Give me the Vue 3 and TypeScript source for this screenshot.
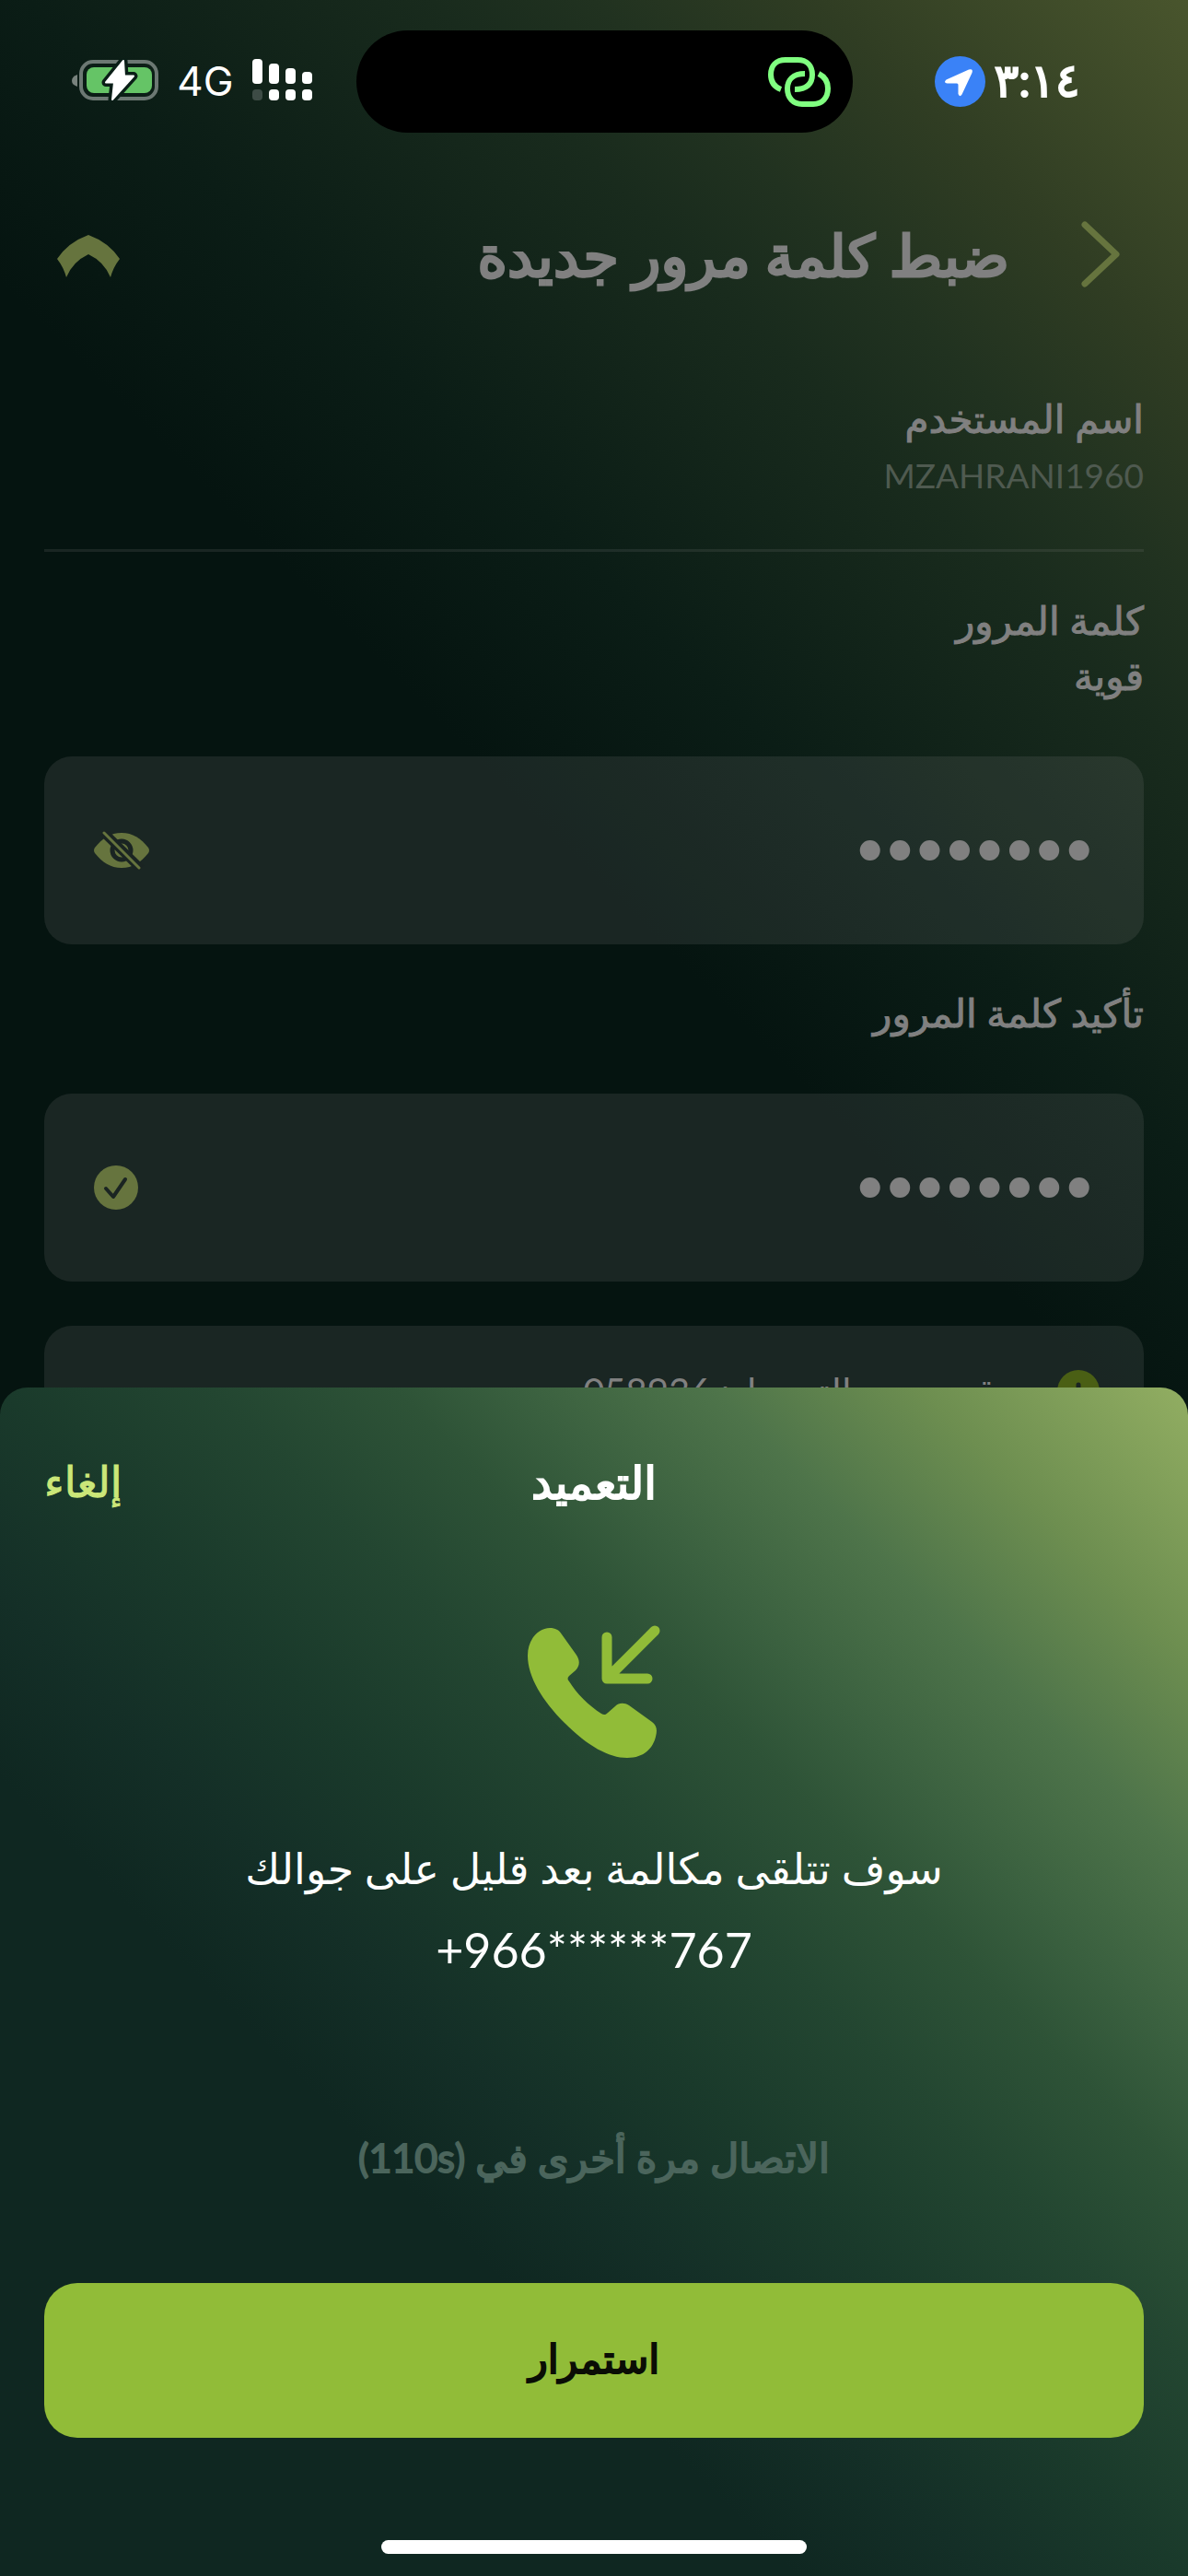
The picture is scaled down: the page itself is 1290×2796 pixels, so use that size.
<script setup lang="ts">
import { ref } from 'vue'

const username = 'MZAHRANI1960'
const password = ref('Abcd1234')
const confirmation = ref('Abcd1234')
const seconds = ref(110)
const bars = [27, 22, 17, 13]
</script>

<template>
  <div class="screen" dir="rtl">
    <div class="status">
      <div class="clock">
        <svg class="location" viewBox="0 0 55 55" aria-hidden="true">
          <circle cx="27.5" cy="27.5" r="27.5" fill="#3a82f7" />
          <path d="M12.500 25.500L37 14.500Q42 13 40.500 18L29.500 41.500Q27 45 25.500 41V31Q25.500 29.500 24 29.500H13.500Q9 28.500 12.500 25.500Z" fill="#fff" />
        </svg>
        <span class="time">٣:١٤</span>
      </div>
      <div class="island">
        <svg class="link" viewBox="0 0 68 54" aria-hidden="true" fill="none" stroke="#80ff80" stroke-width="6">
          <path d="M14 35C6 32 3 26 3 19C3 9 9 3 19 3H32C42 3 48 9 48 19C48 29 42 35 29 35" />
          <path d="M40 18C27 18 21 25 21 34C21 44 27 51 37 51H49C59 51 65 44 65 34C65 26 61 21 55 18" />
        </svg>
      </div>
      <div class="network">
        <div class="signal">
          <span v-for="(h, i) in bars" :key="i" class="column">
            <i class="bar" :style="{ height: h + 'px' }"></i>
            <i class="bar foot" :class="{ off: i === 0 }"></i>
          </span>
        </div>
        <span class="carrier">4G</span>
        <svg class="battery" viewBox="0 0 94 46" aria-hidden="true">
          <path d="M6 17V30Q0 28 0 23.500Q0 19 6 17Z" fill="#78827d" />
          <rect x="10" y="3" width="82" height="40" rx="13" fill="none" stroke="#6c7873" stroke-width="4" />
          <rect x="16" y="9" width="71" height="28" rx="8" fill="#65c466" />
          <path d="M56 2L37 25.500H46L44 44L67 18.500H57Z" fill="#fff" stroke="#0a1e17" stroke-width="9" stroke-linejoin="round" />
          <path d="M56 2L37 25.500H46L44 44L67 18.500H57Z" fill="#fff" stroke="#fff" stroke-width="2" stroke-linejoin="round" />
        </svg>
      </div>
    </div>

    <header class="header">
      <button class="icon-button" type="button" aria-label="رجوع">
        <svg width="42" height="72" viewBox="0 0 42 72" fill="none" stroke="#66743e" stroke-width="7" stroke-linecap="round" stroke-linejoin="round">
          <path d="M4 4L38 36L4 68" />
        </svg>
      </button>
      <h1 class="title">ضبط كلمة مرور جديدة</h1>
      <svg class="brand" viewBox="0 0 68 46" aria-hidden="true">
        <path d="M34 0Q56 8 68 26Q61 35 58 46Q51 29 34 21Q17 29 10 46Q7 35 0 26Q12 8 34 0Z" fill="#66743e" />
      </svg>
    </header>

    <main class="form">
      <section class="account">
        <span class="label">اسم المستخدم</span>
        <span class="username" dir="ltr">{{ username }}</span>
      </section>

      <label class="label" for="password">كلمة المرور</label>
      <span class="label strength">قوية</span>
      <div class="field">
        <input id="password" v-model="password" type="password" />
        <button class="icon-button" type="button" aria-label="إظهار كلمة المرور">
          <svg width="60" height="42" viewBox="0 0 60 42">
            <path d="M1 18C9 8 18 2 30 2C42 2 51 8 59 18Q61 21 59 24C51 34 42 40 30 40C18 40 9 34 1 24Q-1 21 1 18Z" fill="#66743e" />
            <circle cx="30" cy="21" r="10" fill="#66743e" stroke="#1a2422" stroke-width="5" />
            <path d="M10 1L51 41" stroke="#1a2422" stroke-width="10" />
            <path d="M11 2L49 40" stroke="#66743e" stroke-width="3" stroke-linecap="round" />
          </svg>
        </button>
      </div>

      <label class="label confirm" for="confirmation">تأكيد كلمة المرور</label>
      <div class="field">
        <input id="confirmation" v-model="confirmation" type="password" />
        <svg width="48" height="48" viewBox="0 0 48 48" aria-hidden="true">
          <circle cx="24" cy="24" r="24" fill="#66743e" />
          <path d="M13 25L21 34L34 15" fill="none" stroke="#1a2422" stroke-width="4" stroke-linecap="round" stroke-linejoin="round" />
        </svg>
      </div>

      <div class="notice">
        <svg width="46" height="46" viewBox="0 0 46 46" aria-hidden="true">
          <circle cx="23" cy="23" r="23" fill="#4a5f14" />
          <path d="M23 16V25M23 33V34" stroke="#1a2422" stroke-width="5" stroke-linecap="round" />
        </svg>
        <span>رقم مرجع التوصيل: 058936</span>
      </div>
    </main>

    <section class="sheet" role="dialog" aria-labelledby="sheet-title">
      <div class="sheet-header">
        <h2 id="sheet-title" class="sheet-title">التعميد</h2>
        <button class="cancel" type="button">إلغاء</button>
      </div>
      <svg class="call" viewBox="0 0 144 144" aria-hidden="true">
        <path d="M24 3C30 3 34 5 37 10L52 31C57 38 57 43 52 49L45 55C43 57 43 59 45 61C53 74 66 87 80 96C83 98 85 97 87 95L95 88C99 84 105 84 110 87L135 105C140 109 141 113 139 121C136 133 127 144 108 144C88 144 65 131 40 106C16 82 0 56 0 33C0 15 12 3 24 3Z" fill="#91bc38" />
        <path d="M86 13V58H130M86 58L138 6" fill="none" stroke="#91bc38" stroke-width="11" stroke-linecap="round" stroke-linejoin="round" />
      </svg>
      <p class="message">سوف تتلقى مكالمة بعد قليل على جوالك</p>
      <p class="message phone" dir="ltr">+966******767</p>
      <button class="resend" type="button" disabled>الاتصال مرة أخرى في <bdi>({{ seconds }}s)</bdi></button>
      <button class="continue" type="button">استمرار</button>
      <div class="home"></div>
    </section>
  </div>
</template>

<style>
body {
  margin: 0;
  background: #051410;
}
</style>

<style scoped>
.screen {
  position: relative;
  box-sizing: border-box;
  min-height: 100vh;
  overflow: hidden;
  font-family: Lato, "DejaVu Sans", sans-serif;
  color: #808080;
  background: linear-gradient(225deg, #49552d 0, #303d23 283px, #213220 456px, #192b1d 580px, #0b1d16 890px, #051410 1130px);
}
button {
  font-family: inherit;
  border: 0;
  padding: 0;
  background: none;
}
svg {
  display: block;
  flex: none;
}
.status {
  display: grid;
  grid-template-columns: 1fr auto 1fr;
  align-items: center;
  padding: 33px 0 0 22px;
  color: #fff;
}
.clock {
  display: flex;
  align-items: center;
  gap: 10px;
  padding-left: 89px;
  direction: ltr;
}
.time {
  padding-bottom: 6px;
  font-size: 50px;
  line-height: 56px;
  -webkit-text-stroke: 2px currentColor;
}
.location {
  width: 55px;
  height: 55px;
}
.island {
  display: flex;
  justify-content: flex-end;
  align-items: center;
  box-sizing: border-box;
  width: 539px;
  height: 111px;
  padding: 0 24px;
  border-radius: 56px;
  background: #000;
  direction: ltr;
}
.link {
  width: 68px;
  height: 54px;
}
.network {
  display: flex;
  align-items: center;
  gap: 20px;
  padding: 0 48px 4px 0;
}
.signal {
  display: flex;
  align-items: flex-end;
  gap: 7px;
  direction: ltr;
}
.column {
  display: flex;
  flex-direction: column;
  gap: 6px;
}
.bar {
  width: 11px;
  border-radius: 4px;
  background: #fff;
}
.foot {
  height: 12px;
}
.off {
  background: #3d4b45;
}
.carrier {
  padding-top: 2px;
  font-family: Inter, sans-serif;
  font-size: 44px;
  line-height: 54px;
}
.battery {
  width: 94px;
  height: 46px;
}
.header {
  display: flex;
  align-items: center;
  height: 160px;
  padding: 52px 74px 0 62px;
}
.title {
  flex: 1;
  margin: 0 78px 0 0;
  font-size: 62px;
  line-height: 80px;
  font-weight: 400;
  -webkit-text-stroke: 3px currentColor;
}
.brand {
  width: 68px;
  height: 46px;
  margin-top: 4px;
}
.form {
  display: flex;
  flex-direction: column;
  padding: 68px 48px 0;
}
.account {
  display: flex;
  flex-direction: column;
  align-items: flex-start;
  padding-bottom: 48px;
  margin-bottom: 44px;
  border-bottom: 3px solid rgba(128, 128, 128, 0.17);
}
.label {
  font-size: 42px;
  line-height: 60px;
  -webkit-text-stroke: 1px currentColor;
}
.username {
  font-size: 37px;
  line-height: 64px;
  color: #4f5a50;
}
.strength {
  margin-bottom: 58px;
}
.field {
  display: flex;
  align-items: center;
  box-sizing: border-box;
  height: 204px;
  padding: 0 54px;
  border-radius: 30px;
  background: rgba(128, 128, 128, 0.17);
}
.field input {
  flex: 1;
  min-width: 0;
  height: 80px;
  padding: 4px 0 0;
  border: 0;
  outline: 0;
  background: none;
  color: #808080;
  font-family: "DejaVu Sans", sans-serif;
  font-size: 55px;
  -webkit-text-stroke: 6px currentColor;
}
.confirm {
  padding: 44px 0 58px;
}
.notice {
  display: flex;
  align-items: center;
  gap: 48px;
  height: 142px;
  margin-top: 48px;
  padding: 0 48px;
  border-radius: 30px;
  background: rgba(128, 128, 128, 0.17);
  font-size: 40px;
}
.sheet {
  position: absolute;
  inset: auto 0 0;
  display: flex;
  flex-direction: column;
  align-items: center;
  padding: 70px 48px 24px;
  border-radius: 30px 30px 0 0;
  color: #fff;
  background: linear-gradient(225deg, #92ae62 0, #6d8e50 208px, #4e744a 366px, #3a603f 516px, #2e5337 610px, #234631 750px, #1a3a2b 912px, #142f27 1070px, #0f2721 1212px);
}
.sheet-header {
  display: grid;
  grid-template-columns: 1fr auto 1fr;
  align-items: center;
  width: 100%;
}
.sheet-title {
  grid-column: 2;
  margin: 0;
  font-size: 49px;
  line-height: 64px;
  font-weight: 400;
  -webkit-text-stroke: 2px currentColor;
}
.cancel {
  justify-self: end;
  font-size: 46px;
  line-height: 64px;
  color: #cbe779;
  -webkit-text-stroke: 1px currentColor;
}
.call {
  width: 144px;
  height: 144px;
  margin: 124px 0 76px;
}
.message {
  margin: 0;
  font-size: 46px;
  line-height: 88px;
}
.phone {
  font-size: 52px;
}
.resend {
  margin: 146px 0 100px;
  font-size: 43px;
  line-height: 72px;
  color: #4b655c;
  -webkit-text-stroke: 2px currentColor;
}
.continue {
  width: 100%;
  height: 168px;
  padding-bottom: 4px;
  border-radius: 36px;
  background: #91bc38;
  color: #0a0d05;
  font-size: 43px;
  -webkit-text-stroke: 2px currentColor;
}
.home {
  width: 462px;
  height: 15px;
  margin-top: 111px;
  border-radius: 8px;
  background: #fff;
}
</style>
